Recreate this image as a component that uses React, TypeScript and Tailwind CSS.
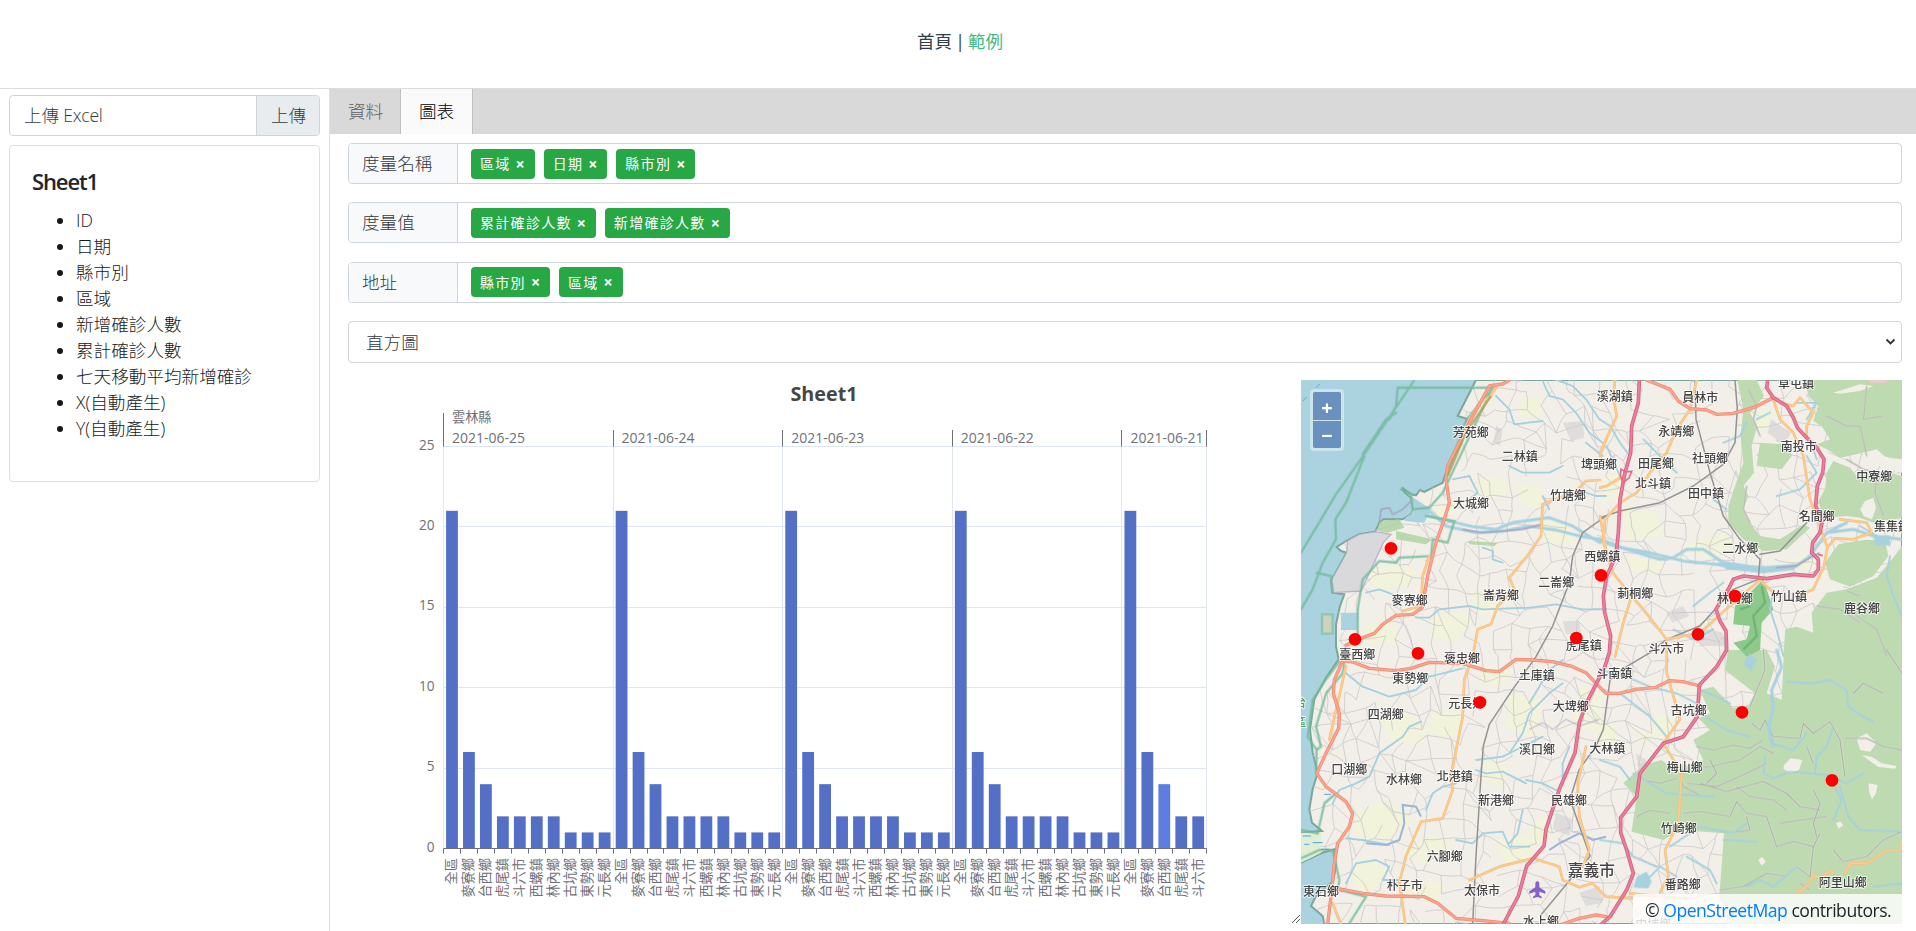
import React from 'react';

const FONT = "font-['Open_Sans','Noto_Sans_CJK_TC',sans-serif]";

const FIELDS = ['ID', '日期', '縣市別', '區域', '新增確診人數', '累計確診人數', '七天移動平均新增確診', 'X(自動產生)', 'Y(自動產生)'];

function Sidebar() {
  return (
    <aside className="flex w-[330px] shrink-0 flex-col border-r border-[#dee2e6] pl-[9px] pr-[9px] pt-[6px] text-[17.6px] text-[#15181b]">
      <div className="flex h-[41px] w-[311px] overflow-hidden rounded-[4px] border border-[#ced4da] font-light leading-[39px] text-[#343a40]">
        <div className="flex-1 pl-[14px] tracking-[-0.2px]">上傳 Excel</div>
        <div className="w-[63px] border-l border-[#ced4da] bg-[#e9ecef] pl-[14px]">上傳</div>
      </div>
      <section className="mt-[9px] h-[337px] w-[311px] rounded-[4px] border border-[#dfdfdf] p-[22px]">
        <h5 className="mb-[13px] text-[22px] font-semibold leading-[26px] tracking-[-1.1px] text-[#212529]">Sheet1</h5>
        <ul className="list-disc pl-[44px] font-light leading-[26px]">
          {FIELDS.map((f) => (
            <li key={f}>{f}</li>
          ))}
        </ul>
      </section>
    </aside>
  );
}

function TagRow({ label, tags }: { label: string; tags: string[] }) {
  return (
    <div className="flex h-[41px] overflow-hidden rounded-[4px] border border-[#ced4da]">
      <div className="w-[109px] shrink-0 border-r border-[#ced4da] bg-[#f8f9fa] pl-[13px] text-[17.6px] font-light leading-[39px] text-[#343a40]">{label}</div>
      <div className="flex items-center gap-[9px] pl-[13px]">
        {tags.map((t) => (
          <span key={t} className="flex h-[30px] items-center rounded-[4px] bg-[#28a745] pl-[9px] pr-[8.6px] text-[14px] tracking-[1.3px] text-white">
            {t}
            <span className="ml-[5px] text-[16px] font-bold leading-[30px]">×</span>
          </span>
        ))}
      </div>
    </div>
  );
}

const TOWNS: [string, number][] = [
  ['全區', 21], ['麥寮鄉', 6], ['台西鄉', 4], ['虎尾鎮', 2], ['斗六市', 2],
  ['西螺鎮', 2], ['林內鄉', 2], ['古坑鄉', 1], ['東勢鄉', 1], ['元長鄉', 1],
];
const DATES = ['2021-06-25', '2021-06-24', '2021-06-23', '2021-06-22', '2021-06-21'];

function Chart() {
  const left = 95.5;
  const right = 858.7;
  const top = 66.5;
  const bottom = 468.5;
  const band = (right - left) / 45;
  const unit = (bottom - top) / 25;
  const px = (v: number) => Math.floor(v) + 0.5;
  return (
    <svg width="952" height="544" className="block" fontSize="13.2" fill="#6E7079">
      <text x="476" y="21" textAnchor="middle" fontSize="19.8" fontWeight="700" fill="#464646" textLength="67" lengthAdjust="spacingAndGlyphs">Sheet1</text>
      {[0, 5, 10, 15, 20, 25].map((v) => (
        <g key={v}>
          <line x1={left} x2={right} y1={px(bottom - v * unit)} y2={px(bottom - v * unit)} stroke="#E0E6F1" />
          <text x="86.5" y={bottom - v * unit + 3} textAnchor="end" fontSize="13.6">{v}</text>
        </g>
      ))}
      {[0, 1, 2, 3, 4, 4.5].map((g) => {
        const x = px(left + g * 10 * band);
        return (
          <g key={g}>
            <line x1={x} x2={x} y1={top} y2={bottom} stroke="#E0E6F1" />
            <line x1={x} x2={x} y1={g === 0 ? 33 : 50} y2={top} stroke="#6E7079" />
          </g>
        );
      })}
      <text x="104" y="42">雲林縣</text>
      {DATES.map((d, i) => (
        <text key={d} x={104 + i * 10 * band} y="63" fontSize="13.9" textLength="73" lengthAdjust="spacingAndGlyphs">{d}</text>
      ))}
      {Array.from({ length: 45 }, (_, i) => {
        const [name, value] = TOWNS[i % 10];
        const cx = left + (i + 0.5) * band;
        return (
          <g key={i}>
            <rect x={cx - 5.9} y={bottom - value * unit} width="11.8" height={value * unit} fill={i === 42 ? '#5d7de0' : '#5470C6'} />
            <text transform={`translate(${cx + 4.5} 478) rotate(-90)`} textAnchor="end">{name}</text>
          </g>
        );
      })}
      <line x1={left} x2={right} y1={bottom} y2={bottom} stroke="#6E7079" />
      {Array.from({ length: 46 }, (_, i) => (
        <line key={i} x1={px(left + i * band)} x2={px(left + i * band)} y1={bottom} y2={bottom + 5} stroke="#6E7079" />
      ))}
      <path d="M944 543l8-8M948 543l4-4" stroke="#555" fill="none" />
    </svg>
  );
}

/* Map geometry is kept per tile; each tile has its own origin. */
const TILE = { nw: 'translate(0 0)', ne: 'translate(912 0)', sw: 'translate(0 822)', se: 'translate(912 822)' } as const;
type Tile = keyof typeof TILE;
type Shape = [Tile, string];

const LAND =
  'M540 12L485 120L512 128L510 150L496 200L450 290L440 320L410 335L385 348L372 342L360 358L345 355L318 335L325 348L345 365L352 400L345 415L320 430L262 430L250 440L238 467L190 475L155 492L122 513L135 525L152 530L105 615L110 650L145 655L132 690L120 745L120 812L128 850L90 905L55 970L42 1060L50 1130L65 1190L50 1240L40 1300L48 1340L78 1365L15 1370L15 1460L80 1430L115 1420L120 1470L112 1515L60 1560L45 1590L80 1620L85 1644L1818 1644L1818 12Z';

const FARMS: Shape[] = [
  ['nw', 'M545 300l70 5l35 35l-60 30l-45-20zM680 60l60 10l-10 60l-60-10zM430 380l50 5l-20 40l-50-10zM210 590l90-30l60 20l-10 50l-110 10zM520 650l60-10l20 60l-50 20zM410 720l90-15l30 30l-50 60l-80-10zM660 320l80 20l-10 60l-60-20zM720 430l90 10l30 60l-90 10zM210 745l90 0l10 60l-100 0z'],
  ['sw', 'M250 210l80-20l60 40l-10 50l-90 0zM410 180l100 10l-30 70l-80-10zM640 130l100 20l-20 110l-90-20zM560 40l100 20l-50 50l-60-10zM180 480l100-30l70 60l-80 60l-90-10zM320 610l90-60l60 30l-80 70zM600 570l100-10l10 60l-80 20zM560 330l80 20l-20 60l-60-20zM850 110l70 20l-10 120l-80-20zM700 530l60-40l10 70l-60 30zM200 620l80 40l-70 80l-50-60zM330 690l120 10l-30 60l-100-20z'],
  ['ne', 'M70 400l100 10l20 70l-110 10zM10 300l60-10l-10 70l-50 20zM240 510l130-40l50 50l-90 30zM500 580l120-50l30 40l-110 20zM90 540l100 20l-20 40l-80-20zM470 100l50 10l-10 50l-40 0z'],
  ['se', 'M170 190l70 20l-30 60l-60-10zM0 210l40 10l10 60l-50 10zM100 230l60 30l-30 30z'],
];

const FORESTS: Shape[] = [
  ['ne', 'M615 12L906 12L906 255L850 240L800 228L745 240L720 245L690 225L650 205L690 190L665 150L640 135L655 90L625 60Z'],
  ['ne', 'M700 255L750 275L770 300L860 290L906 300L906 425L820 440L780 425L740 420L670 425L655 375L675 340L680 290Z'],
  ['ne', 'M675 560L715 505L790 492L855 492L865 540L820 600L750 632L690 610Z'],
  ['ne', 'M906 510L906 842L550 842L556 760L590 752L640 770L635 710L680 650L740 640L830 605L880 545Z'],
  ['ne', 'M412 12L470 12L492 60L450 110L472 150L455 210L462 290L430 330L445 360L430 400L445 435L480 480L540 490L610 445L630 455L560 520L490 525L430 490L385 440L385 390L405 330L430 260L422 180L430 100Z'],
  ['ne', 'M480 200L560 205L575 240L545 280L470 270Z'],
  ['se', 'M552 0L906 0L906 822L390 822L358 740L372 550L240 540L190 570L95 545L110 440L70 400L130 345L185 330L215 355L270 345L310 330L280 270L330 240L295 205L330 190L300 120L340 110L400 175L445 165L465 130L375 60L385 0L500 0L525 50L500 130L545 150Z'],
];

const CLEARINGS: Shape[] = [
  ['ne', 'M780 400l15-25l25-10l8 30l-12 35l-25-10zM790 230l40-10l30 25l46 5l0 40l-60-20l-60 0z'],
  ['ne', 'M700 50l80-25l40 5l-40 15l-60 8z'],
  ['se', 'M770 265l30-15l30 30l-20 25l-30-5zM785 315l30 5l30 20l45 8l-5 8l-50-5zM552 345l20-20l35 5l-10 30l-25 8l-22-12zM805 400l28 5l-5 25l-12 18l-8-20zM475 630l12-10l10 15l-12 12zM708 520l12-6l10 12l-14 10z'],
];

const STREAMS: Shape[] = [
  ['nw', 'M600 60L640 100L655 145L740 135M470 310L520 300L545 350L520 370M640 270L680 290L760 290L800 270M740 15L760 60L800 70L840 110L880 170L920 200M780 12L830 30L870 70L910 130M870 200L920 240M210 650L250 640L290 655L310 680M360 725L400 725L430 700L520 690L560 700L700 695L780 685L860 700L930 700M560 515L590 525L590 550L620 560M840 340L900 360L930 360M740 360L760 400'],
  ['ne', 'M0 130L30 150L60 200L90 240M130 190L180 240L230 290M340 370L380 400M20 210L60 300M370 200L420 180L440 140M620 240L650 290L600 340L530 360M470 130L510 110M585 80L650 80L620 130M780 450L830 480M870 540L860 600L880 660L906 720M640 220L650 250M280 690L330 650L370 620M220 760L280 790L340 760M520 640L510 700L530 760L550 840'],
  ['sw', 'M150 70L200 110L280 140L360 120L400 80L440 70L500 55M375 215L340 230L320 260L250 310L220 380L180 400L130 420L110 460M540 330L620 320L660 300L700 280L740 260M540 360L570 370L620 365L690 400M800 100L760 130L700 190L680 250L640 310M780 420L740 400L690 390M820 290L800 340L800 400M390 480L410 430L440 410L480 400M150 565L200 570L280 585M150 700L180 640L240 630L280 650L260 690L330 690M480 570L530 580L560 550L620 545L640 590L700 590M680 480L665 550L640 580M700 160L760 60L800 30'],
  ['se', 'M560 95L640 100L690 90L740 120L745 170L790 200L820 215M495 320L490 370L520 385L570 365L680 375L740 400L790 370M700 230L680 290L650 320L645 370M700 400L725 450L700 510M720 410L745 500L780 540L906 545M100 370L200 430L340 440M300 120L350 140L390 160M300 190L380 240L450 260M510 230L515 280L580 300L620 250M0 60L80 80L150 110L230 130L290 160M60 130L150 200L200 260M260 620L330 660L350 700M130 700L180 650L230 680M370 570L470 575M440 710L480 690L520 710L590 650M210 590L300 530L400 550L440 520M0 330L60 350L90 390M820 710L906 700M0 570L70 580L100 620L170 650'],
];

const RIVERS: Shape[] = [
  ['nw', 'M350 375L400 420L480 440L530 452L600 460L650 440L760 425L830 450L912 500'],
  ['nw', 'M400 405L450 450L540 470L620 465L700 450L780 462L850 480L912 490'],
  ['ne', 'M0 495L60 515L150 530L250 555L350 565L430 580L500 580L590 570L630 540L680 470L740 440'],
  ['ne', 'M0 490L80 520L180 550L220 545L260 520L310 520L370 560L470 575M680 470L760 460L820 480L906 490'],
  ['se', 'M530 0L545 50L515 120L520 180L505 230L520 290'],
];

const COUNTY: Shape[] = [
  ['nw', 'M15 530L120 355L205 235L355 12M15 700L50 640L80 560L120 490L118 430L150 380L205 240M300 110L270 130L200 235M305 35L590 35L540 140L440 350L400 395L350 400L345 355M305 35L300 90L280 130M590 35L512 130L450 300M62 590L105 600L110 650M475 435L455 500L410 490L405 540L310 545L300 560L250 555L200 610L185 700L185 800M390 420L475 435M345 355L315 340'],
  ['sw', 'M130 35L85 95L50 150L35 260L62 300L60 370M145 35L140 70L90 130L60 230L75 290L62 300M120 430L85 460L65 550L15 540M15 625L70 600L110 600L130 690L125 720M130 720L210 740L160 820'],
];

const MOTORWAYS: Shape[] = [
  ['ne', 'M118 12L115 80L95 150L92 230L75 290L60 370L55 470L48 540L20 600L10 660L14 710L32 780L28 830L12 880L-2 905L-40 980L-62 1040L-75 1130L-122 1240L-162 1360L-168 1410L-220 1470L-245 1560L-290 1644'],
  ['ne', 'M503 12L500 35L520 65L560 90L580 125L592 155L620 185L650 215L672 250L668 290L652 330L647 390L668 430L660 470L638 500L635 530L655 550L655 580L640 600L580 595L500 608L430 600L400 610L385 640L348 700L360 735L378 765L380 822L350 872L298 927L292 1022L250 1082L190 1102L120 1192L110 1262L62 1325L62 1370L80 1422L100 1492L80 1542L30 1622L5 1644'],
];

const TRUNKS: Shape[] = [
  ['nw', 'M640 12L620 24L580 30L520 140L455 270L450 310L460 380L445 430L420 500L395 600L378 695L350 715L300 718L260 745L235 772L200 785L150 808'],
  ['ne', 'M140 12L210 40L235 75L270 98L320 102L350 115L400 112L460 95L520 65'],
  ['sw', 'M140 32L170 36L220 55L300 62L345 55L400 37L500 40L570 62L610 65L660 28L710 30L770 35L830 50L870 68L900 100L930 130L970 130L1020 118L1080 112L1120 92L1160 95L1212 108'],
  ['sw', 'M140 32L115 90L112 130L130 190L128 235L90 310L62 370L90 410L150 455L170 490L160 530L125 580L115 640L105 740L95 822M130 717L200 730L270 738L385 740L425 760L480 805L560 812L640 820M800 822L850 805L900 795L930 800'],
];

const PRIMARIES: Shape[] = [
  ['nw', 'M600 35L580 65L550 80L510 150M912 312L870 315L840 345L780 370L740 385L735 480L690 545L640 605L655 640L605 690L585 745L545 760L530 842L505 910L500 1022L465 1200L470 1242L440 1327L375 1337L330 1440L310 1520L328 1644M400 540L380 600L375 690L320 705M912 420L930 520M930 190L912 240M150 870L130 960L100 1090'],
  ['ne', 'M45 12L40 60L50 120L5 220M290 12L270 100L230 160L200 230L150 290L110 350L60 380L15 430L10 500L38 590L95 660L70 740L45 842M95 660L130 700L200 790L200 890L240 1030L190 1102L245 1192L235 1342L195 1422L205 1500L180 1550M200 790L300 770L400 680L480 612L530 660M520 70L540 130L580 170L610 240L630 370L670 480L682 515L705 487L760 490L815 470L800 440L720 430M682 515L672 570L640 640L590 660M540 80L580 90L600 65L640 110L620 150L620 180M70 300L20 330L0 335'],
  ['sw', 'M520 690L610 650L710 625L790 650L800 690L850 712L890 700L930 740L1010 745M870 290L845 400L850 500L880 600L860 650M110 760L135 822'],
  ['se', 'M590 730L625 705L640 675L665 685L690 660L700 670M735 670L750 640L800 640L860 602L906 600L900 580M90 730L180 740L260 745'],
];

const RAILS: Shape[] = [
  ['nw', 'M930 420L860 470L830 540L820 620L770 750L720 842L650 940L580 1045L562 1110L555 1200L540 1440L530 1644'],
  ['ne', 'M0 425L60 405L180 380L280 330L370 265L405 200L412 100L405 12M285 12L288 130L330 290L370 420L420 490L480 550L475 610L400 640L300 750L200 790L150 830L80 872L30 912L10 1060L-12 1110L-62 1180L-90 1270L-30 1440L-180 1620M620 440L540 525L480 535'],
];

const TRACKS: Shape[] = [
  ['ne', 'M800 30L790 130L850 120M780 150L800 240M740 250L790 280L830 290L825 350L850 420M770 720L830 760L860 840M650 690L720 700L780 740M740 645L780 660M680 120L740 150L780 150M445 40L470 90L460 130L480 180M440 330L430 400L450 440'],
  ['se', 'M455 220L480 240L495 210L520 260L600 265L610 220L640 250L690 215L720 270L735 380M735 265L800 265L850 290L906 300M240 360L330 350L420 330L480 290L520 310M260 400L350 410L440 370L500 340M250 490L300 485L390 500L410 455L440 490L500 500L530 590L580 575L640 590L660 550M300 400L380 425L490 395L560 430L600 470L660 480M640 590L630 680L590 650M360 720L430 710L500 670L560 680M700 600L730 635L800 620L850 570L906 545M490 0L495 60L450 170M620 290L640 340M600 700L630 720M380 550L450 540L440 500M760 130L790 100L850 130M540 520L600 510L680 500M300 435L250 410L240 380M860 0L906 70M290 290L340 300L400 285L450 295L490 270M330 330L350 370L320 400M410 410L450 440L520 450L560 480M110 500L150 480L210 490M130 390L180 400L230 385M640 420L660 460L640 520L650 560'],
];

const LABELS: [Tile, number, number, string, number?][] = [
  ['nw', 524, 168, '芳苑鄉'], ['nw', 671, 240, '二林鎮'], ['nw', 909, 264, '埤頭鄉'], ['nw', 816, 357, '竹塘鄉'], ['nw', 525, 381, '大城鄉'],
  ['nw', 341, 673, '麥寮鄉'], ['nw', 615, 658, '崙背鄉'], ['nw', 781, 620, '二崙鄉'], ['nw', 919, 542, '西螺鎮'], ['nw', 863, 808, '虎尾鎮'],
  ['ne', 44, 60, '溪湖鎮'], ['ne', 301, 65, '員林市'], ['ne', 229, 166, '永靖鄉'], ['ne', 168, 262, '田尾鄉'], ['ne', 330, 248, '社頭鄉'],
  ['ne', 159, 323, '北斗鎮'], ['ne', 318, 353, '田中鎮'], ['ne', 588, 22, '草屯鎮'], ['ne', 596, 210, '南投市'], ['ne', 823, 300, '中寮鄉'],
  ['ne', 650, 421, '名間鄉'], ['ne', 876, 451, '集集鎮'], ['ne', 421, 517, '二水鄉'], ['ne', 106, 651, '莿桐鄉'], ['ne', 405, 666, '林內鄉'],
  ['ne', 567, 660, '竹山鎮'], ['ne', 786, 696, '鹿谷鄉'], ['ne', 199, 816, '斗六市'],
  ['sw', 184, 12, '臺西鄉'], ['sw', 498, 26, '褒忠鄉'], ['sw', 343, 85, '東勢鄉'], ['sw', 722, 75, '土庫鎮'], ['sw', 511, 160, '元長鄉'],
  ['sw', 269, 193, '四湖鄉'], ['sw', 824, 170, '大埤鄉'], ['sw', 723, 299, '溪口鄉'], ['sw', 160, 359, '口湖鄉'], ['sw', 324, 387, '水林鄉'],
  ['sw', 476, 379, '北港鎮'], ['sw', 600, 450, '新港鄉'], ['sw', 819, 450, '民雄鄉'], ['sw', 446, 620, '六腳鄉'], ['sw', 326, 706, '朴子市'],
  ['sw', 75, 724, '東石鄉'], ['sw', 558, 721, '太保市'], ['sw', 735, 815, '水上鄉'], ['sw', 886, 660, '嘉義市', 47],
  ['se', 43, 71, '斗南鎮'], ['se', 266, 181, '古坑鄉'], ['se', 22, 296, '大林鎮'], ['se', 254, 352, '梅山鄉'], ['se', 236, 536, '竹崎鄉'],
  ['se', 248, 704, '番路鄉'], ['se', 728, 696, '阿里山鄉'], ['se', 160, 822, '中埔鄉'],
];

const POINTS: [Tile, number, number][] = [
  ['nw', 285, 517], ['nw', 177, 790], ['nw', 366, 832], ['nw', 841, 786], ['nw', 915, 598],
  ['ne', 405, 660], ['ne', 294, 775], ['sw', 552, 157], ['se', 426, 187], ['se', 696, 391],
];

/* Jittered mesh of local streets. */
function buildStreets() {
  let seed = 41;
  const rnd = () => {
    seed = (seed * 16807) % 2147483647;
    return seed / 2147483647;
  };
  const step = 50;
  const cols = 38;
  const rows = 35;
  const pts: [number, number][][] = [];
  for (let r = 0; r < rows; r++) {
    pts.push([]);
    for (let c = 0; c < cols; c++) pts[r].push([Math.round(c * step + (rnd() - 0.5) * 44), Math.round(r * step + (rnd() - 0.5) * 44)]);
  }
  let d = '';
  for (let r = 0; r < rows; r++) {
    for (let c = 0; c < cols; c++) {
      const [x, y] = pts[r][c];
      const link = (p: [number, number]) => {
        d += `M${x} ${y}Q${Math.round((x + p[0]) / 2 + (rnd() - 0.5) * 14)} ${Math.round((y + p[1]) / 2 + (rnd() - 0.5) * 14)} ${p[0]} ${p[1]}`;
      };
      if (c + 1 < cols && rnd() < 0.66) link(pts[r][c + 1]);
      if (r + 1 < rows && rnd() < 0.66) link(pts[r + 1][c]);
      if (c + 1 < cols && r + 1 < rows && rnd() < 0.12) link(pts[r + 1][c + 1]);
    }
  }
  return d;
}
const STREETS = buildStreets();

function Layer({ shapes, ...rest }: { shapes: Shape[] } & React.SVGProps<SVGGElement>) {
  return (
    <g fill="none" strokeLinejoin="round" strokeLinecap="round" {...rest}>
      {shapes.map(([t, d], i) => (
        <path key={i} d={d} transform={TILE[t]} />
      ))}
    </g>
  );
}

function MapView() {
  return (
    <div className="relative h-[544px] w-[601px] overflow-hidden bg-[#aad3df]">
      <svg width="601" height="544" viewBox="15 12 1803 1632" className="block">
        <defs>
          <clipPath id="land"><path d={LAND} /></clipPath>
        </defs>
        <path d={LAND} fill="#f2efe9" stroke="#7aa79c" strokeWidth="6" />
        <g clipPath="url(#land)">
          <Layer shapes={FARMS} fill="#f1f3da" />
          <g fill="#dedddc">
            <path d="M800 140l60-5l5 50l-40 10zM600 150l20 10l-8 50l-18-10zM800 735l50 0l5 35l-45 5zM505 385l30 5l-5 25z" />
            <path d="M1425 130l60 40l-20 40l-50-40zM1110 710l50-20l20 30l-50 20zM1220 755l60 15l10 40l-80 0zM780 1310l50 20l-10 50l-50-20zM850 1550l60-20l10 50l-50 10zM1020 1130l40 30l-30 40z" />
          </g>
          <path d={STREETS} fill="none" stroke="#cdc9cd" strokeWidth="2.5" />
          <path d="M155 495L190 475L238 467L285 475L262 500L195 645L110 650L105 615L152 530Z" fill="#d9d9dc" stroke="#b9b4cc" strokeWidth="4" />
          <path d="M135 710h48v52h-48zM345 360l60 40l-20 40l-60-5z" fill="#aad3df" />
          <path d="M250 435l60-5l15 25l-50 15l-30-5zM300 465l110 25l-20 15l-90-15zM515 495l90 5l-10 10l-75-5z" fill="#add19e" opacity=".8" />
          <path d="M15 1370h60v60l-60 30z" fill="#e0eed4" />
        </g>
        <Layer shapes={FORESTS} fill="#bddab1" />
        <Layer shapes={CLEARINGS} fill="#f2efe9" />
        <path transform={TILE.ne} d="M490 610L500 640L520 700L485 740L480 822L440 842L400 800L440 790L450 750L400 745L405 690L450 650Z" fill="#8cc98a" />
        <path transform={TILE.ne} d="M485 630L495 680L460 720L470 780L430 820M420 700L450 690" fill="none" stroke="#6fb577" strokeWidth="7" />
        <path d="M78 715h32v58h-32z" fill="#c9d3bd" stroke="#8cc7ae" strokeWidth="7" />
        <Layer shapes={TRACKS} stroke="#e4e4dc" strokeWidth="7" opacity=".6" />
        <Layer shapes={TRACKS} stroke="#a9b1a5" strokeWidth="3.2" />
        <Layer shapes={STREAMS} stroke="#a5d0de" strokeWidth="5.5" />
        <Layer shapes={RIVERS} stroke="#a7d1df" strokeWidth="9" />
        <path transform={TILE.ne} d="M350 558l80 10l70 2l100-8l-20 20l-90 10l-110-12zM820 478h50v30h-45z" fill="#a7d1df" />
        <path transform={TILE.se} d="M110 680l30-15l15 30l-10 20l-45-2zM430 40l20-30l20 20l-15 35z" fill="#a7d1df" />
        <path d="M500 460L560 470L680 460L740 445M1440 575L1500 570L1570 530M250 440L255 400L280 395L290 415L320 400L345 375M105 615L110 650" fill="none" stroke="#a79ac0" strokeWidth="4" />
        <path transform={TILE.sw} d="M375 500L360 470L320 465L325 520L310 570L270 585L210 580M760 600L790 580L850 550L890 570L930 560" fill="none" stroke="#9cb5d4" strokeWidth="6" />
        <path d="M700 1060l40-20l30 20l40-30l40 20l60-20" fill="none" stroke="#b9a9c2" strokeWidth="3" />
        <Layer shapes={COUNTY} stroke="#6fba99" strokeWidth="7" opacity=".8" />
        <path d="M20 75l12-12M60 35l12-12M85 1255h20M20 1380h25M50 1400h30M75 1420h25M25 1405h15" stroke="#5b9fe0" strokeWidth="3" />
        <Layer shapes={RAILS} stroke="#939393" strokeWidth="4.5" />
        <Layer shapes={PRIMARIES} stroke="#f3bd78" strokeWidth="8" />
        <Layer shapes={PRIMARIES} stroke="#fccb8e" strokeWidth="5" />
        <Layer shapes={TRUNKS} stroke="#f0876f" strokeWidth="10" />
        <Layer shapes={TRUNKS} stroke="#f9a48f" strokeWidth="6" />
        <path d="M585 60L510 170L455 300" fill="none" stroke="#b5a04f" strokeWidth="7" opacity=".8" />
        <Layer shapes={MOTORWAYS} stroke="#d95d80" strokeWidth="11" />
        <Layer shapes={MOTORWAYS} stroke="#e8809a" strokeWidth="6" />
        <path d="M975 280l14 8l18-2l-8 20l-18 14l-8-20zM1565 535l15 4" fill="none" stroke="#dd6f8c" strokeWidth="5" />
        <path d="M1722 4h50v16h-50z" fill="#f0c9d0" />
        <path transform={TILE.sw} d="M724 694c-5 0-6 5-6 10v8l-18 12v7l18-6v10l-7 5v5l13-4l13 4v-5l-7-5v-10l18 6v-7l-18-12v-8c0-5-1-10-6-10z" fill="#8461c4" />
        <g fill="#444" stroke="#fff" strokeOpacity=".7" strokeWidth="6" strokeLinejoin="round" paintOrder="stroke" textAnchor="middle" fontWeight="500" className="font-['Noto_Sans_CJK_TC',sans-serif]">
          {LABELS.map(([t, x, y, s, size = 36], i) => (
            <text key={i} x={x} y={y + size * 0.38} fontSize={size} transform={TILE[t]}>{s}</text>
          ))}
          <text transform={TILE.sw} x="13" y="170" fontSize="36" fill="#4aa564">台</text>
          <text transform={TILE.sw} x="13" y="230" fontSize="36" fill="#4aa564">區</text>
        </g>
        {POINTS.map(([t, x, y], i) => (
          <circle key={i} cx={x} cy={y} r="19" fill="#f00" transform={TILE[t]} />
        ))}
      </svg>
      <div className="absolute left-[9px] top-[9px] flex w-[34px] flex-col gap-px rounded-[4px] bg-white/40 p-[3px] text-center text-[20px] font-bold text-white">
        <button className="h-[28px] rounded-t-[2px] bg-[#6a90bd] leading-[31px]">+</button>
        <button className="h-[27px] rounded-b-[2px] bg-[#6a90bd] leading-[30px]">−</button>
      </div>
      <div className="absolute bottom-0 right-0 h-[30px] w-[269px] whitespace-nowrap rounded-tl-[4px] bg-white/80 pl-[12px] text-[17.6px] leading-[32px] tracking-[-0.5px] text-[#212529]">
        © <a className="text-[#007bff]">OpenStreetMap</a> contributors.
      </div>
    </div>
  );
}

export default function App() {
  return (
    <div className={`flex h-[931px] w-full flex-col overflow-hidden bg-white ${FONT}`}>
      <header className="flex h-[88px] shrink-0 items-start justify-center pl-[4px] pt-[28px] text-[17.6px] leading-[26px] text-[#2c3e50]">
        <a>首頁</a>
        <span className="mx-[3px]">|</span>
        <a className="text-[#42b983]">範例</a>
      </header>
      <div className="flex min-h-0 flex-1 border-t border-[#dcdcdc]">
        <Sidebar />
        <main className="min-w-0 flex-1">
          <nav className="flex h-[45px] bg-[#d9d9d9] text-[17.6px] font-light leading-[45px]">
            <a className="w-[71px] border-r border-[#bfbfbf] pl-[18px] text-[#606060]">資料</a>
            <a className="w-[72px] border-r border-[#bfbfbf] bg-[#fafafa] pl-[18px] text-black">圖表</a>
          </nav>
          <div className="flex h-[229px] flex-col justify-between pl-[18px] pr-[14px] pt-[9px]">
            <TagRow label="度量名稱" tags={['區域', '日期', '縣市別']} />
            <TagRow label="度量值" tags={['累計確診人數', '新增確診人數']} />
            <TagRow label="地址" tags={['縣市別', '區域']} />
            <div className="flex h-[42px] items-center justify-between rounded-[4px] border border-[#ced4da] pl-[17px] pr-[5px] text-[17.6px] font-light text-[#343a40]">
              <span>直方圖</span>
              <svg width="11" height="8" viewBox="0 0 11 8" fill="none" stroke="#333" strokeWidth="1.8"><path d="M1.5 1.5l4 4l4-4" /></svg>
            </div>
          </div>
          <div className="mt-[17px] flex pl-[18px]">
            <Chart />
            <div className="ml-[1px]"><MapView /></div>
          </div>
        </main>
      </div>
    </div>
  );
}
